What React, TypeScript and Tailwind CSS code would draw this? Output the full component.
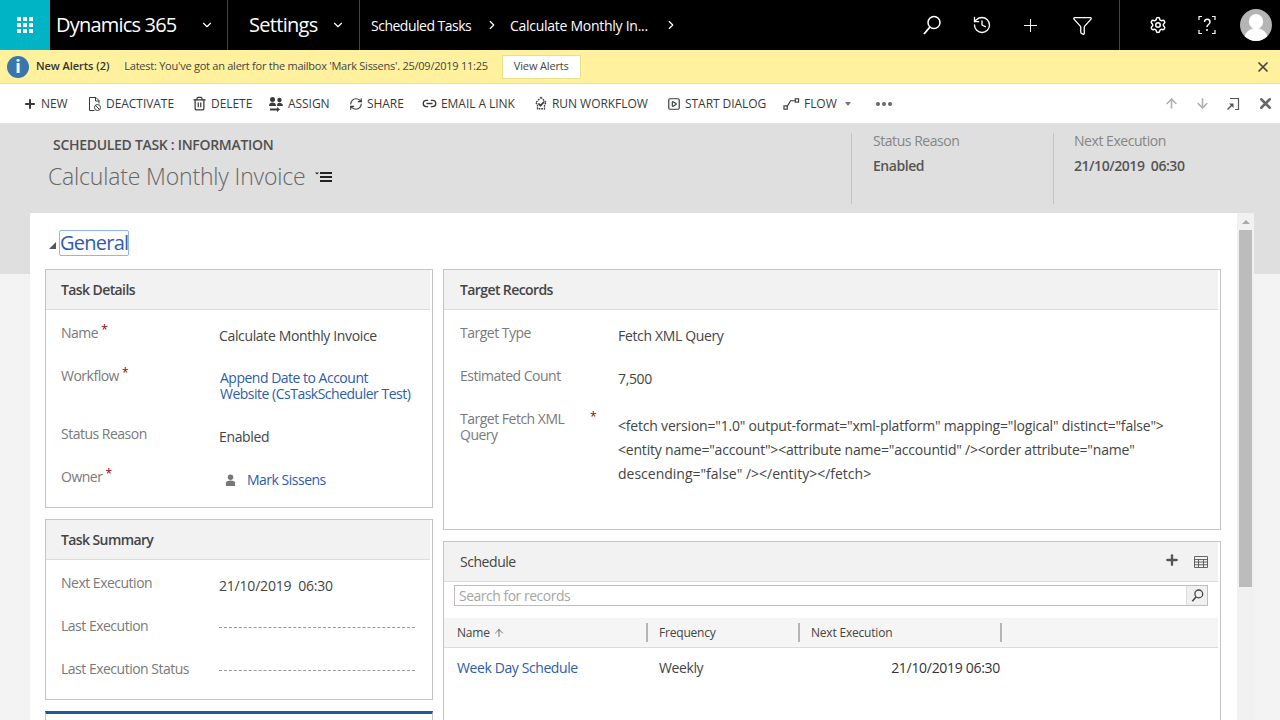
import { ArrowDown, ArrowUp, ChevronDown, ChevronRight, Funnel, History, Link2, Plus, RefreshCw, Settings, SquarePlay, Trash2, X } from "lucide-react";
import type { ReactNode } from "react";

const commands = [
  { label: "NEW", icon: <Plus className="w-[14px] h-[14px]" strokeWidth={3.5} />, w: "w-[65px]" },
  {
    label: "DEACTIVATE",
    w: "w-[104px]",
    icon: (
      <svg viewBox="0 0 14 16" className="w-[14px] h-[16px]" fill="none" stroke="currentColor" strokeWidth="1">
        <path d="M6.500 14.500H1.500V1.500h6.500l3 3v3M7.500 1.500v3.500h3.500" />
        <circle cx="9.500" cy="11.500" r="3" />
        <path d="M7.500 9.500l4 4" />
      </svg>
    ),
  },
  { label: "DELETE", icon: <Trash2 className="w-[15px] h-[15px]" strokeWidth={2} />, w: "w-[76px]" },
  {
    label: "ASSIGN",
    w: "w-[81px]",
    icon: (
      <svg viewBox="0 0 16 16" className="w-[16px] h-[16px]" fill="currentColor">
        <circle cx="4.500" cy="3.500" r="2.500" />
        <circle cx="11.500" cy="4" r="2.200" />
        <path d="M1 10c0-2.500 1.500-3.500 3.500-3.500S8 7.500 8 10zM9 10c0-2 1-3.200 2.500-3.200S15 8 15 10z" />
        <path d="M2 12.500h7V11l3 2.500L9 16v-1.500H2z" />
      </svg>
    ),
  },
  { label: "SHARE", icon: <RefreshCw className="w-[14px] h-[14px]" strokeWidth={2} />, w: "w-[73px]" },
  { label: "EMAIL A LINK", icon: <Link2 className="w-[15px] h-[15px]" strokeWidth={2.2} />, w: "w-[112px]" },
  {
    label: "RUN WORKFLOW",
    w: "w-[133px]",
    icon: (
      <svg viewBox="0 0 16 16" className="w-[14px] h-[15px]" fill="none" stroke="currentColor" strokeWidth="1.500">
        <path d="M8 1l6 6-2 2v5H4V9L2 7z" strokeDasharray="2 1" />
        <path d="M5 8l2.500 2.500L11.500 6" strokeWidth="2" />
      </svg>
    ),
  },
  { label: "START DIALOG", icon: <SquarePlay className="w-[14px] h-[14px]" strokeWidth={2} />, w: "w-[116px]" },
];

// magnifier with the handle bottom-left, as Dynamics draws it
const SearchFlip = ({ className, width = 1.5 }: { className: string; width?: number }) => (
  <svg viewBox="0 0 20 20" className={className} fill="none" stroke="currentColor" strokeWidth={width}>
    <circle cx="12" cy="7.500" r="6" />
    <path d="M8 12L2 19" strokeWidth={width + 0.4} />
  </svg>
);

const Field = ({ label, required, children, valueClass = "text-[#444] tracking-[-0.35px]" }: { label: string; required?: boolean; children: ReactNode; valueClass?: string }) => (
  <div className="flex h-[43px] items-start">
    <div className="w-[158px] shrink-0 text-[#7a7a7a] leading-[20px] tracking-[-0.5px]">
      {label}
      {required && <span className="text-[#a00000] ml-[3px] text-[12px] relative top-[-4px]">*</span>}
    </div>
    <div className={`leading-[16px] pt-[5px] ${valueClass}`}>{children}</div>
  </div>
);

const SectionHead = ({ title, children, bold = true, pl = "pl-[15px]" }: { title: string; children?: ReactNode; bold?: boolean; pl?: string }) => (
  <div className={`h-[40px] mr-[2px] bg-[#f2f2f2] border-b border-[#dcdcdc] flex items-center justify-between text-[#444] text-[14px] ${pl} ${bold ? "font-semibold tracking-[-0.6px]" : "tracking-[-0.45px]"}`}>
    <span>{title}</span>
    {children}
  </div>
);

const Dashes = () => <div className="w-[196px] mt-[6px] border-t border-dashed border-[#9a9a9a]" />;

const Avatar = () => (
  <div className="w-[32px] h-[32px] rounded-full bg-[#b5b5b5] overflow-hidden relative">
    <div className="absolute left-[9px] top-[5px] w-[14px] h-[15px] rounded-full bg-white" />
    <div className="absolute left-[4px] top-[19px] w-[24px] h-[15px] rounded-t-full bg-white" />
  </div>
);

export default function App() {
  return (
    <div className="w-[1280px] h-[720px] overflow-hidden bg-[#f3f3f3] font-['Open_Sans',sans-serif] text-[13px] tracking-[-0.2px]">
      {/* nav */}
      <div className="h-[50px] bg-black flex items-center text-white">
        <div className="w-[50px] h-[50px] bg-[#01b4c5] flex items-center justify-center">
          <div className="grid grid-cols-3 gap-[2px]">
            {Array.from({ length: 9 }).map((_, i) => (
              <div key={i} className="w-[4px] h-[4px] bg-white" />
            ))}
          </div>
        </div>
        <div className="w-[178px] h-full border-r border-[#444] flex items-center pl-[6px]">
          <span className="text-[20px] w-[144px] tracking-[-0.8px]">Dynamics 365</span>
          <ChevronDown className="w-[14px] h-[14px]" />
        </div>
        <div className="w-[132px] h-full border-r border-[#444] flex items-center pl-[21px]">
          <span className="text-[20px] w-[82px] tracking-[-0.7px]">Settings</span>
          <ChevronDown className="w-[14px] h-[14px]" />
        </div>
        <div className="flex items-center text-[14px] pl-[11px] tracking-[-0.5px]">
          <span className="w-[114px]">Scheduled Tasks</span>
          <ChevronRight className="w-[14px] h-[14px]" />
          <span className="ml-[11px] w-[154px] whitespace-nowrap tracking-[-0.27px]">Calculate Monthly In...</span>
          <ChevronRight className="w-[14px] h-[14px]" />
        </div>
        <div className="ml-auto flex items-center h-full">
          <div className="flex items-center pr-[26px] h-full border-r border-[#444]">
            <SearchFlip className="w-[20px] h-[20px]" />
            <History className="w-[20px] h-[20px] ml-[30px]" strokeWidth={1.6} />
            <Plus className="w-[21px] h-[21px] ml-[28px]" strokeWidth={1.1} />
            <Funnel className="w-[21px] h-[21px] ml-[31px]" strokeWidth={1.5} />
          </div>
          <div className="flex items-center w-[160px] pl-[29px]">
            <Settings className="w-[18px] h-[18px]" strokeWidth={2} />
            <svg viewBox="0 0 18 20" className="w-[18px] h-[20px] ml-[31px]" fill="none" stroke="white" strokeWidth="1.200">
              <path d="M1 5V1.500h3M14 1.500h3V5M1 15v3.500h3M14 18.500h3V15" />
              <path d="M6.500 7c0-4 5.500-3.500 5.500 0 0 2.500-3 2.500-3 5M9 14v2" strokeWidth="1.500" />
            </svg>
            <div className="ml-[24px]">
              <Avatar />
            </div>
          </div>
        </div>
      </div>

      {/* alert bar */}
      <div className="h-[34px] bg-[#fff19d] border-b border-[#e8e08a] flex items-center pl-[7px] pr-[9px]">
        <div className="w-[22px] h-[22px] rounded-full bg-[#3a76ae] text-white flex items-center justify-center font-bold text-[18px]">i</div>
        <span className="ml-[7px] text-[11px] font-semibold text-[#333] tracking-[-0.05px]">New Alerts (2)</span>
        <span className="ml-[15px] text-[11px] text-[#444] tracking-[-0.25px]">Latest: You've got an alert for the mailbox 'Mark Sissens'. 25/09/2019 11:25</span>
        <button className="ml-[14px] w-[79px] h-[24px] bg-white border border-[#e8e08a] text-[11px] text-[#444] tracking-[-0.15px]">View Alerts</button>
        <X className="ml-auto w-[16px] h-[16px] text-[#444]" strokeWidth={2.6} />
      </div>

      {/* command bar */}
      <div className="h-[40px] bg-white border-b border-[#e4e4e4] flex items-center pl-[23px] pr-[6px] text-[#3a3a3a] text-[12px] font-medium tracking-[-0.05px]">
        {commands.map((c) => (
          <div key={c.label} className={`flex items-center gap-[4px] shrink-0 whitespace-nowrap ${c.w}`}>
            {c.icon}
            <span>{c.label}</span>
          </div>
        ))}
        <div className="flex items-center gap-[4px] whitespace-nowrap w-[93px]">
          <svg viewBox="0 0 18 14" className="w-[17px] h-[14px]" fill="none" stroke="currentColor" strokeWidth="1.200">
            <rect x="1" y="9" width="3.500" height="3.500" />
            <rect x="13" y="1.500" width="3.500" height="3.500" />
            <path d="M4.500 9.500L8 3.500h5" />
          </svg>
          <span>FLOW</span>
          <div className="ml-[4px] border-x-[3.500px] border-x-transparent border-t-[4px] border-t-[#777]" />
        </div>
        <div className="flex gap-[2px]">
          {[0, 1, 2].map((i) => (
            <div key={i} className="w-[4px] h-[4px] rounded-full bg-[#666]" />
          ))}
        </div>
        <div className="ml-auto flex items-center gap-[16px]">
          <ArrowUp className="w-[15px] h-[15px] text-[#b0b0b0]" strokeWidth={2.6} />
          <ArrowDown className="w-[15px] h-[15px] text-[#b0b0b0]" strokeWidth={2.6} />
          <svg viewBox="0 0 14 14" className="w-[14px] h-[14px] text-[#555]" fill="none" stroke="currentColor" strokeWidth="1.200">
            <path d="M4 1.500h8.500v11H9" />
            <path d="M1.500 12.500l5-5" strokeWidth="1.500" />
            <path d="M3 6.500h4.500V11z" fill="currentColor" stroke="none" />
          </svg>
          <X className="w-[17px] h-[17px] ml-[1px] text-[#666]" strokeWidth={3.500} />
        </div>
      </div>

      {/* record header */}
      <div className="h-[150px] bg-[#dfdfdf] flex pt-[9px]">
        <div className="w-[851px] pl-[48px]">
          <div className="pl-[5px] text-[14px] font-semibold text-[#505050] leading-[22px] mt-[1px] tracking-[-0.3px]">SCHEDULED TASK : INFORMATION</div>
          <div className="flex items-center mt-[4px]">
            <span className="text-[23px] font-light text-[#666] leading-[32px] tracking-[-0.18px]">Calculate Monthly Invoice</span>
            <svg viewBox="0 0 18 12" className="w-[18px] h-[12px] ml-[10px] mt-[2px] text-[#222]" fill="currentColor">
              <path d="M0 1.500h4L2 3.500zM5 1h12v2H5zM5 5h12v2H5zM5 9h12v2H5z" />
            </svg>
          </div>
        </div>
        <div className="w-[202px] h-[71px] border-l border-[#c4c4c4] pl-[21px] leading-[20px] text-[14px] tracking-[-0.45px]">
          <div className="text-[#858585] -mt-[2px]">Status Reason</div>
          <div className="mt-[5px] font-semibold text-[#555]">Enabled</div>
        </div>
        <div className="h-[71px] border-l border-[#c4c4c4] pl-[20px] leading-[20px] text-[14px] tracking-[-0.45px]">
          <div className="text-[#858585] -mt-[2px]">Next Execution</div>
          <div className="mt-[5px] font-semibold text-[#555]">21/10/2019&nbsp;&nbsp;06:30</div>
        </div>
      </div>

      {/* form */}
      <div className="-mt-[61px] ml-[30px] w-[1224px] h-[507px] flex overflow-hidden">
        <div className="w-[1207px] bg-white pl-[15px] overflow-hidden">
          <div className="h-[56px] flex items-center pt-[4px]">
            <svg viewBox="0 0 7 7" className="w-[7px] h-[7px] ml-[4px] mr-[3px] mt-[4px] text-[#555]" fill="currentColor">
              <path d="M7 0v7H0z" />
            </svg>
            <div className="text-[20px] leading-[24px] h-[26px] text-[#2f5ca8] border border-[#8fb7ea] rounded-[2px] tracking-[-0.75px]">General</div>
          </div>

          <div className="flex gap-[10px] text-[14px]">
            <div className="w-[388px] flex flex-col gap-[11px]">
              <div className="h-[239px] border border-[#c4c4c4]">
                <SectionHead title="Task Details" />
                <div className="pl-[15px] pt-[13px]">
                  <Field label="Name" required>Calculate Monthly Invoice</Field>
                  <div className="h-[58px]">
                    <Field label="Workflow" required valueClass="text-[#2f5ca8] ml-[1px] -mt-[1px] tracking-[-0.5px]">
                      Append Date to Account
                      <br />
                      Website (CsTaskScheduler Test)
                    </Field>
                  </div>
                  <Field label="Status Reason">Enabled</Field>
                  <Field label="Owner" required valueClass="text-[#2f5ca8] tracking-[-0.5px]">
                    <div className="flex items-center">
                      <svg viewBox="0 0 12 14" className="w-[11px] h-[13px] ml-[6px] mr-[11px] text-[#777]" fill="currentColor">
                        <circle cx="6" cy="3.500" r="3" />
                        <path d="M1 13V9.500C1 8 3 7 6 7s5 1 5 2.500V13z" />
                      </svg>
                      Mark Sissens
                    </div>
                  </Field>
                </div>
              </div>

              <div className="h-[181px] border border-[#c4c4c4]">
                <SectionHead title="Task Summary" />
                <div className="pl-[15px] pt-[13px]">
                  <Field label="Next Execution" valueClass="text-[#444]">21/10/2019&nbsp;&nbsp;06:30</Field>
                  <Field label="Last Execution"><Dashes /></Field>
                  <Field label="Last Execution Status"><Dashes /></Field>
                </div>
              </div>

              <div className="h-[40px] border border-[#c4c4c4] border-t-[3px] border-t-[#1c5a9c]" />
            </div>

            <div className="w-[778px] flex flex-col gap-[11px]">
              <div className="h-[261px] border border-[#c4c4c4]">
                <SectionHead title="Target Records" pl="pl-[16px]" />
                <div className="pl-[16px] pt-[13px]">
                  <Field label="Target Type">Fetch XML Query</Field>
                  <Field label="Estimated Count">7,500</Field>
                  <div className="flex pt-[1px]">
                    <div className="w-[158px] shrink-0 text-[#7a7a7a] leading-[16px] pt-[1px] relative tracking-[-0.5px]">
                      Target Fetch XML
                      <br />
                      Query
                      <span className="absolute left-[130px] top-[-1px] text-[12px] text-[#a00000]">*</span>
                    </div>
                    <div className="w-[570px] text-[#444] leading-[24px] text-[14px] pt-[4px] tracking-[-0.2px]">
                      &lt;fetch version="1.0" output-format="xml-platform" mapping="logical" distinct="false"&gt;
                      <br />
                      &lt;entity name="account"&gt;&lt;attribute name="accountid" /&gt;&lt;order attribute="name"
                      <br />
                      <span className="tracking-[0px]">descending="false" /&gt;&lt;/entity&gt;&lt;/fetch&gt;</span>
                    </div>
                  </div>
                </div>
              </div>

              <div className="h-[200px] border border-[#c4c4c4]">
                <SectionHead title="Schedule" bold={false} pl="pl-[16px]">
                  <div className="flex items-center gap-[14px] pr-[10px] text-[#555] -mt-[3px]">
                    <Plus className="w-[16px] h-[16px]" strokeWidth={3.500} />
                    <svg viewBox="0 0 14 12" className="w-[14px] h-[12px] mt-[3px]" fill="none" stroke="currentColor" strokeWidth="0.900">
                      <path d="M.5.500h13v11H.5zM.5 3.500h13M.5 6h13M.5 8.750h13M4.500 3.500v8M9.500 3.500v8" />
                    </svg>
                  </div>
                </SectionHead>
                <div className="ml-[10px] mr-[12px] mt-[3px] h-[21px] border border-[#bdbdbd] flex items-center justify-between pl-[4px] text-[14px] text-[#a6a6a6] tracking-[-0.5px]">
                  <span>Search for records</span>
                  <div className="w-[21px] h-[19px] bg-[#f0f0f0] flex items-center justify-center border-l border-[#ddd]">
                    <SearchFlip className="w-[13px] h-[13px] text-[#444]" width={2} />
                  </div>
                </div>
                <div className="mt-[12px] h-[30px] mr-[2px] bg-[#f5f5f5] border-b border-[#dcdcdc] flex items-center text-[12px] text-[#444]">
                  <div className="w-[204px] pl-[13px] h-[19px] border-r-2 border-[#b5b5b5] flex items-center gap-[3px]">
                    Name <ArrowUp className="w-[12px] h-[12px]" strokeWidth={1.500} />
                  </div>
                  <div className="w-[152px] pl-[11px] h-[19px] border-r-2 border-[#b5b5b5] flex items-center">Frequency</div>
                  <div className="w-[202px] pl-[11px] h-[19px] border-r-2 border-[#b5b5b5] flex items-center">Next Execution</div>
                </div>
                <div className="h-[39px] flex items-center">
                  <div className="w-[204px] pl-[13px] text-[#2f5ca8] tracking-[-0.4px]">Week Day Schedule</div>
                  <div className="w-[152px] pl-[11px] text-[#444] tracking-[-0.4px]">Weekly</div>
                  <div className="w-[202px] pr-[2px] text-right text-[#333] tracking-[-0.3px]">21/10/2019 06:30</div>
                </div>
              </div>
            </div>
          </div>
        </div>

        {/* scrollbar */}
        <div className="w-[17px] bg-[#f1f1f1] flex flex-col items-center">
          <div className="h-[17px] flex items-center justify-center">
            <div className="border-x-[4px] border-x-transparent border-b-[4px] border-b-[#a8a8a8]" />
          </div>
          <div className="w-[13px] h-[357px] bg-[#bcbcbc]" />
        </div>
      </div>
    </div>
  );
}
